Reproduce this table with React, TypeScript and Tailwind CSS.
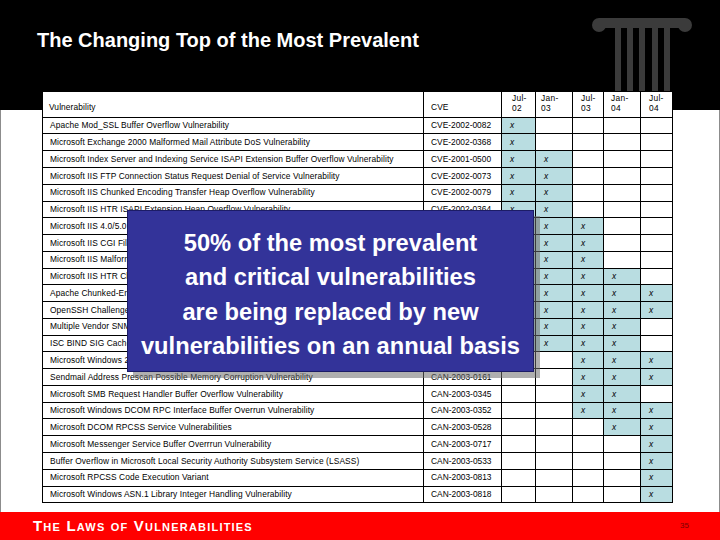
import React from "react";

const periods = ["Jul-|02", "Jan-|03", "Jul-|03", "Jan-|04", "Jul-|04"];
const headPad = ["pl-[10px]", "pl-[5px]", "pl-[8px]", "pl-[7px]", "pl-[8px]"];

// [name, cve, periods marked]
const rows: [string, string, number[]][] = [
  ["Apache Mod_SSL Buffer Overflow Vulnerability", "CVE-2002-0082", [0]],
  ["Microsoft Exchange 2000 Malformed Mail Attribute DoS Vulnerability", "CVE-2002-0368", [0]],
  ["Microsoft Index Server and Indexing Service ISAPI Extension Buffer Overflow Vulnerability", "CVE-2001-0500", [0, 1]],
  ["Microsoft IIS FTP Connection Status Request Denial of Service Vulnerability", "CVE-2002-0073", [0, 1]],
  ["Microsoft IIS Chunked Encoding Transfer Heap Overflow Vulnerability", "CVE-2002-0079", [0, 1]],
  ["Microsoft IIS HTR ISAPI Extension Heap Overflow Vulnerability", "CVE-2002-0364", [0, 1]],
  ["Microsoft IIS 4.0/5.0 Cross-Site Scripting Vulnerability", "CVE-2002-0074", [0, 1, 2]],
  ["Microsoft IIS CGI Filename Decode Error Vulnerability", "CVE-2001-0333", [0, 1, 2]],
  ["Microsoft IIS Malformed HTTP Request Denial of Service Vulnerability", "CVE-2001-0151", [0, 1, 2]],
  ["Microsoft IIS HTR Chunked Encoding Transfer Heap Overflow Vulnerability", "CVE-2002-0071", [0, 1, 2, 3]],
  ["Apache Chunked-Encoding Memory Corruption Vulnerability", "CVE-2002-0392", [0, 1, 2, 3, 4]],
  ["OpenSSH Challenge-Response Buffer Overflow Vulnerabilities", "CVE-2002-0639", [0, 1, 2, 3, 4]],
  ["Multiple Vendor SNMP Request Handling Vulnerabilities", "CVE-2002-0013", [0, 1, 2, 3]],
  ["ISC BIND SIG Cached RR Overflow Vulnerability", "CVE-2002-1219", [0, 1, 2, 3]],
  ["Microsoft Windows 2000 WebDAV Buffer Overflow Vulnerability", "CAN-2003-0109", [2, 3, 4]],
  ["Sendmail Address Prescan Possible Memory Corruption Vulnerability", "CAN-2003-0161", [2, 3, 4]],
  ["Microsoft SMB Request Handler Buffer Overflow Vulnerability", "CAN-2003-0345", [2, 3]],
  ["Microsoft Windows DCOM RPC Interface Buffer Overrun Vulnerability", "CAN-2003-0352", [2, 3, 4]],
  ["Microsoft DCOM RPCSS Service Vulnerabilities", "CAN-2003-0528", [3, 4]],
  ["Microsoft Messenger Service Buffer Overrrun Vulnerability", "CAN-2003-0717", [4]],
  ["Buffer Overflow in Microsoft Local Security Authority Subsystem Service (LSASS)", "CAN-2003-0533", [4]],
  ["Microsoft RPCSS Code Execution Variant", "CAN-2003-0813", [4]],
  ["Microsoft Windows ASN.1 Library Integer Handling Vulnerability", "CAN-2003-0818", [4]],
];

const Pillar = () => (
  <svg width="100" height="92" viewBox="0 0 100 92" className="mt-[18px] shrink-0">
    <g fill="#3b3b3b">
      <circle cx="7" cy="7" r="7" />
      <circle cx="93" cy="7" r="7" />
      <rect x="7" y="0" width="86" height="7" />
      <rect x="13" y="6" width="74" height="4" />
      <rect x="23" y="10" width="6" height="82" />
      <rect x="35" y="10" width="6" height="82" />
      <rect x="47" y="10" width="6" height="82" />
      <rect x="60" y="10" width="6" height="82" />
      <rect x="72" y="10" width="6" height="82" />
    </g>
  </svg>
);

export default function App() {
  return (
    <div className="relative w-[720px] h-[540px] overflow-hidden flex flex-col bg-white font-['Liberation_Sans',Arial,sans-serif]">
      <div className="h-[110px] shrink-0 bg-black flex items-start justify-between pl-[37px] pr-[28px]">
        <h1 className="mt-[28px] text-[20px] leading-[24px] font-bold text-white">
          The Changing Top of the Most Prevalent
        </h1>
        <Pillar />
      </div>

      <div className="flex-1 border-x border-[#8c8c8c]">
        <div className="relative z-10 -mt-[19.3px] ml-[41px] w-[631px] grid grid-cols-[380px_77px_33px_36px_30px_36px_31px] grid-rows-[25px_repeat(23,15.77px)] gap-px bg-black border border-black text-[8.4px] tracking-[0.1px] text-black">
          <div className="bg-white flex items-end pl-[6px] pb-[3px]">Vulnerability</div>
          <div className="bg-white flex items-end pl-[7px] pb-[3px]">CVE</div>
          {periods.map((p, i) => (
            <div key={p + i} className={`bg-white flex flex-col justify-end pb-[3px] leading-[10.5px] tracking-[0.3px] ${headPad[i]}`}>
              <span>{p.split("|")[0]}</span>
              <span>{p.split("|")[1]}</span>
            </div>
          ))}
          {rows.map(([name, cve, marks]) => (
            <React.Fragment key={name}>
              <div className="bg-white flex items-center pl-[7px] whitespace-nowrap overflow-hidden">{name}</div>
              <div className="bg-white flex items-center pl-[7px] tracking-normal">{cve}</div>
              {periods.map((p, i) =>
                marks.includes(i) ? (
                  <div key={i} className="bg-[#b9dde1] flex items-center pl-[8px] italic">x</div>
                ) : (
                  <div key={i} className="bg-white" />
                )
              )}
            </React.Fragment>
          ))}
        </div>
      </div>

      <div className="h-[28px] shrink-0 bg-[#ff0000] flex items-center justify-between pl-[33px] pr-[31px]">
        <span className="text-white font-bold text-[15px] tracking-[1.2px] [font-variant-caps:small-caps]">The Laws of Vulnerabilities</span>
        <span className="text-[#7a0000] text-[8px]">35</span>
      </div>

      <div className="absolute left-[127px] top-[210px] w-[407px] h-[162px] bg-[#333399] border border-[#1c1c66] shadow-[6px_6px_0_rgba(110,110,110,0.55)] z-20 flex flex-col items-center justify-center pt-[7px] text-white font-bold text-[23.7px] leading-[34.5px]">
        <p>50% of the most prevalent</p>
        <p>and critical vulnerabilities</p>
        <p>are being replaced by new</p>
        <p>vulnerabilities on an annual basis</p>
      </div>
    </div>
  );
}
